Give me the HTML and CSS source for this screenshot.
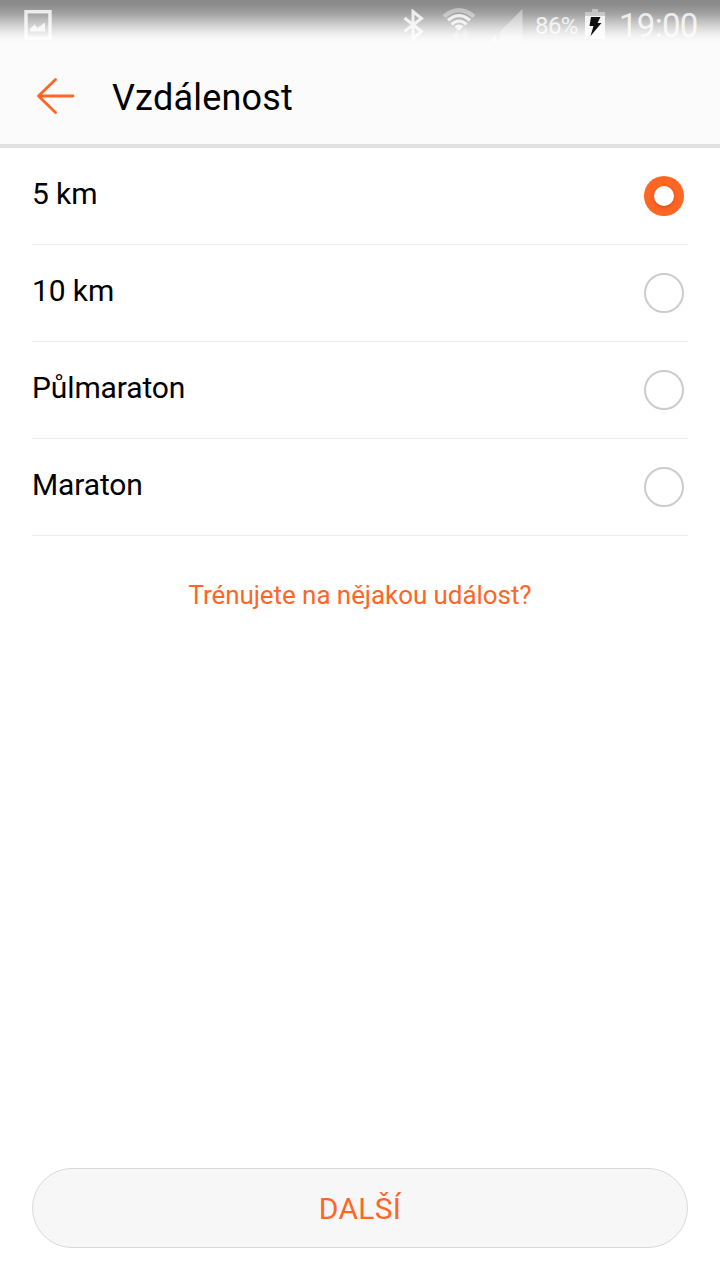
FILE: index.html
```html
<!DOCTYPE html>
<html lang="cs">
<head>
<meta charset="utf-8">
<title>Vzdálenost</title>
<link rel="stylesheet" href="styles.css">
</head>
<body>
<div class="screen">
  <div class="status">
    <svg class="icon-picture" width="28" height="30" viewBox="0 0 28 30">
      <path d="M2 1.700H26V28.300H2Z" fill="none" stroke="#fff" stroke-width="3.400" opacity=".8"/>
      <path d="M6 21.500V19l4.500-4.500 3 3.500L21 12.500V21.500Z" fill="#fff" opacity=".8"/>
    </svg>
    <div class="status-right">
      <svg class="icon-bt" width="22" height="32" viewBox="0 0 22 32">
        <path d="M1.500 9L18.500 22.500 10 29.500V2.500L18.500 9.500 1.500 22.500" fill="none" stroke="#fff" stroke-width="3" opacity=".8"/>
      </svg>
      <svg class="icon-wifi" width="34" height="32" viewBox="0 0 34 32">
        <g fill="none" stroke="#fff">
          <path d="M2 8.500Q17-4 32 8.500" stroke-width="4.200" opacity=".4"/>
          <path d="M6 12.300Q17 2.800 28 12.300" stroke-width="3.200" opacity=".8"/>
          <path d="M9.500 16.400Q17 9.500 24.500 16.400" stroke-width="3" opacity=".8"/>
        </g>
        <path d="M12.500 18.500Q17 14.500 21.500 18.500L17 23Z" fill="#fff" opacity=".8"/>
        <path d="M11 25h3v-4l3 3v4h3v-2l-5 6-5-6zM18 26l5-5.500 5 5.500h-3v6h-4v-6z" fill="#fff" opacity=".3"/>
      </svg>
      <svg class="icon-signal" width="34" height="32" viewBox="0 0 34 32">
        <path d="M11 22.500L33.500 0V32H11Z" fill="#fff" opacity=".4"/>
        <path d="M1 32L7 26V32Z" fill="#fff" opacity=".8"/>
      </svg>
      <span class="percent">86%</span>
      <svg class="icon-battery" width="20" height="30" viewBox="0 0 20 30">
        <path d="M0 7V3H7V0H13V3H20V7Z" fill="#fff" opacity=".4"/>
        <path d="M0 7H20V30H0Z" fill="#fff" opacity=".85"/>
        <path d="M6 8H15.500L12.500 14H16.500L5.500 27 8.500 17H4.500Z" fill="#111"/>
      </svg>
      <span class="clock">19:00</span>
    </div>
  </div>
  <header class="header">
    <svg class="back" width="40" height="40" viewBox="0 0 40 40">
      <path d="M20.500 3.500L3.500 20 20.500 36.500M3.500 20H38" fill="none" stroke="#ff6624" stroke-width="2.800" stroke-linecap="round" stroke-linejoin="round"/>
    </svg>
    <h1 class="title">Vzdálenost</h1>
  </header>
  <main class="content">
    <div class="row"><span class="label">5 km</span><span class="radio"><span class="radio-on"></span></span></div>
    <div class="row"><span class="label">10 km</span><span class="radio"></span></div>
    <div class="row"><span class="label">Půlmaraton</span><span class="radio"></span></div>
    <div class="row"><span class="label">Maraton</span><span class="radio"></span></div>
    <a class="event-link">Trénujete na nějakou událost?</a>
  </main>
  <button class="next">DALŠÍ</button>
</div>
</body>
</html>
```
FILE: styles.css
```css
* { box-sizing: border-box; }
body { margin: 0; background: #fff; font-family: Roboto, "Noto Sans", sans-serif; }
.screen { width: 720px; height: 1280px; display: flex; flex-direction: column; }
.status {
  height: 48px;
  display: flex;
  justify-content: space-between;
  align-items: flex-start;
  padding: 0 21px 0 24px;
  background: linear-gradient(#888 0, #8d8d8d 5px, #a0a0a0 13px, #c0c0c0 21px, #dedede 29px, #f3f3f3 36px, #fbfbfb 42px);
}
.status svg { display: block; flex: none; }
.icon-picture { margin-top: 10px; }
.status-right { display: flex; align-items: flex-start; color: rgba(255, 255, 255, .8); }
.icon-bt { margin: 9px 17px 0 0; }
.icon-wifi { margin: 8px 13px 0 0; }
.icon-signal { margin: 9px 12px 0 0; }
.percent { width: 44px; margin-top: 12px; font-size: 24px; line-height: 28px; letter-spacing: -.6px; }
.icon-battery { margin: 9px 14px 0 6px; }
.clock { width: 80px; margin-top: 7px; font-size: 33px; line-height: 38px; letter-spacing: -.7px; white-space: nowrap; }
.header {
  height: 100px;
  display: flex;
  align-items: center;
  padding-left: 35px;
  background: #fbfbfb;
  border-bottom: 4px solid #e1e1e1;
}
.title { margin: 3px 0 0 37px; font-size: 36px; line-height: 42px; font-weight: 400; letter-spacing: .2px; color: #000; }
.content { flex: 1; display: flex; flex-direction: column; padding: 0 32px; }
.row {
  height: 97px;
  display: flex;
  justify-content: space-between;
  align-items: center;
  padding-right: 4px;
  border-bottom: 1px solid #ececec;
}
.label { padding-bottom: 5px; font-size: 30px; line-height: 36px; letter-spacing: -.12px; color: #000; }
.radio { width: 40px; height: 40px; border: 2px solid #ccc; border-radius: 50%; }
.radio:has(.radio-on) {
  display: flex;
  align-items: center;
  justify-content: center;
  border: 0;
  background: #ff6624;
}
.radio-on { width: 20px; height: 20px; border-radius: 50%; background: #fff; box-shadow: 0 2px 4px rgba(120, 50, 10, .35); }
.event-link { margin-top: 43px; font-size: 26px; line-height: 32px; letter-spacing: -.07px; text-align: center; color: #ff6624; }
.next {
  height: 80px;
  margin: 0 32px 32px;
  padding: 2px 0 0;
  border: 1px solid #d9d9d9;
  border-radius: 40px;
  background: #f7f7f7;
  font-family: inherit;
  font-size: 30px;
  line-height: 36px;
  letter-spacing: .3px;
  color: #ff6624;
}
```
